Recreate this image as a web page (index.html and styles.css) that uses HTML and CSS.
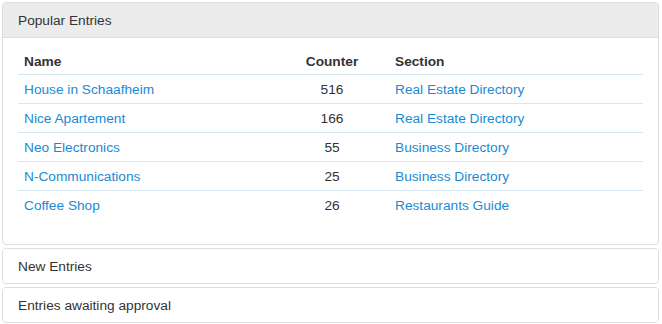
FILE: index.html
```html
<!DOCTYPE html>
<html>
<head>
<meta charset="utf-8">
<link rel="stylesheet" href="styles.css">
</head>
<body>
<div class="panels">
  <div class="panel">
    <div class="panel-heading">Popular Entries</div>
    <div class="panel-body">
      <table class="entries">
        <thead>
          <tr>
            <th class="c-name">Name</th>
            <th class="c-count">Counter</th>
            <th class="c-sec">Section</th>
          </tr>
        </thead>
        <tbody>
          <tr><td><a href="#">House in Schaafheim</a></td><td class="num">516</td><td><a href="#">Real Estate Directory</a></td></tr>
          <tr><td><a href="#">Nice Apartement</a></td><td class="num">166</td><td><a href="#">Real Estate Directory</a></td></tr>
          <tr><td><a href="#">Neo Electronics</a></td><td class="num">55</td><td><a href="#">Business Directory</a></td></tr>
          <tr><td><a href="#">N-Communications</a></td><td class="num">25</td><td><a href="#">Business Directory</a></td></tr>
          <tr><td><a href="#">Coffee Shop</a></td><td class="num">26</td><td><a href="#">Restaurants Guide</a></td></tr>
        </tbody>
      </table>
    </div>
  </div>
  <div class="panel">
    <div class="panel-heading plain">New Entries</div>
  </div>
  <div class="panel">
    <div class="panel-heading plain">Entries awaiting approval</div>
  </div>
</div>
</body>
</html>
```
FILE: styles.css
```css
html, body {
  margin: 0;
  padding: 0;
  background: #fff;
}
body {
  font-family: "Liberation Sans", Arial, sans-serif;
  font-size: 13.7px;
  color: #333;
}
.panels {
  padding: 2px 3px 2px 2px;
  display: flex;
  flex-direction: column;
  gap: 3px;
}
.panel {
  border: 1px solid #dddddd;
  border-radius: 4px;
  background: #fff;
  overflow: hidden;
}
.panel-heading {
  background: #ececec;
  border-bottom: 1px solid #dddddd;
  padding: 8px 15px 7px;
  line-height: 19px;
  color: #333;
}
.panel-heading.plain {
  background: #fff;
  border-bottom: 0;
  padding: 8px 15px 7px;
}
.panel-body {
  padding: 11px 15px 11px;
}
.entries {
  width: 100%;
  border-collapse: collapse;
  margin-bottom: 14px;
}
.entries th, .entries td {
  padding: 6px 6px 4px;
  line-height: 18px;
  text-align: left;
}
.entries th {
  font-weight: bold;
  padding-top: 3px;
  padding-bottom: 3px;
  height: 19px;
  border-bottom: 1px solid #d5e8f2;
}
.entries tbody tr + tr td {
  border-top: 1px solid #d5e8f2;
}
.entries .c-name { width: 245px; }
.entries .c-count { width: 102px; text-align: center; }
.entries .num { text-align: center; }
.entries a {
  color: #1a8ad3;
  text-decoration: none;
}
```
